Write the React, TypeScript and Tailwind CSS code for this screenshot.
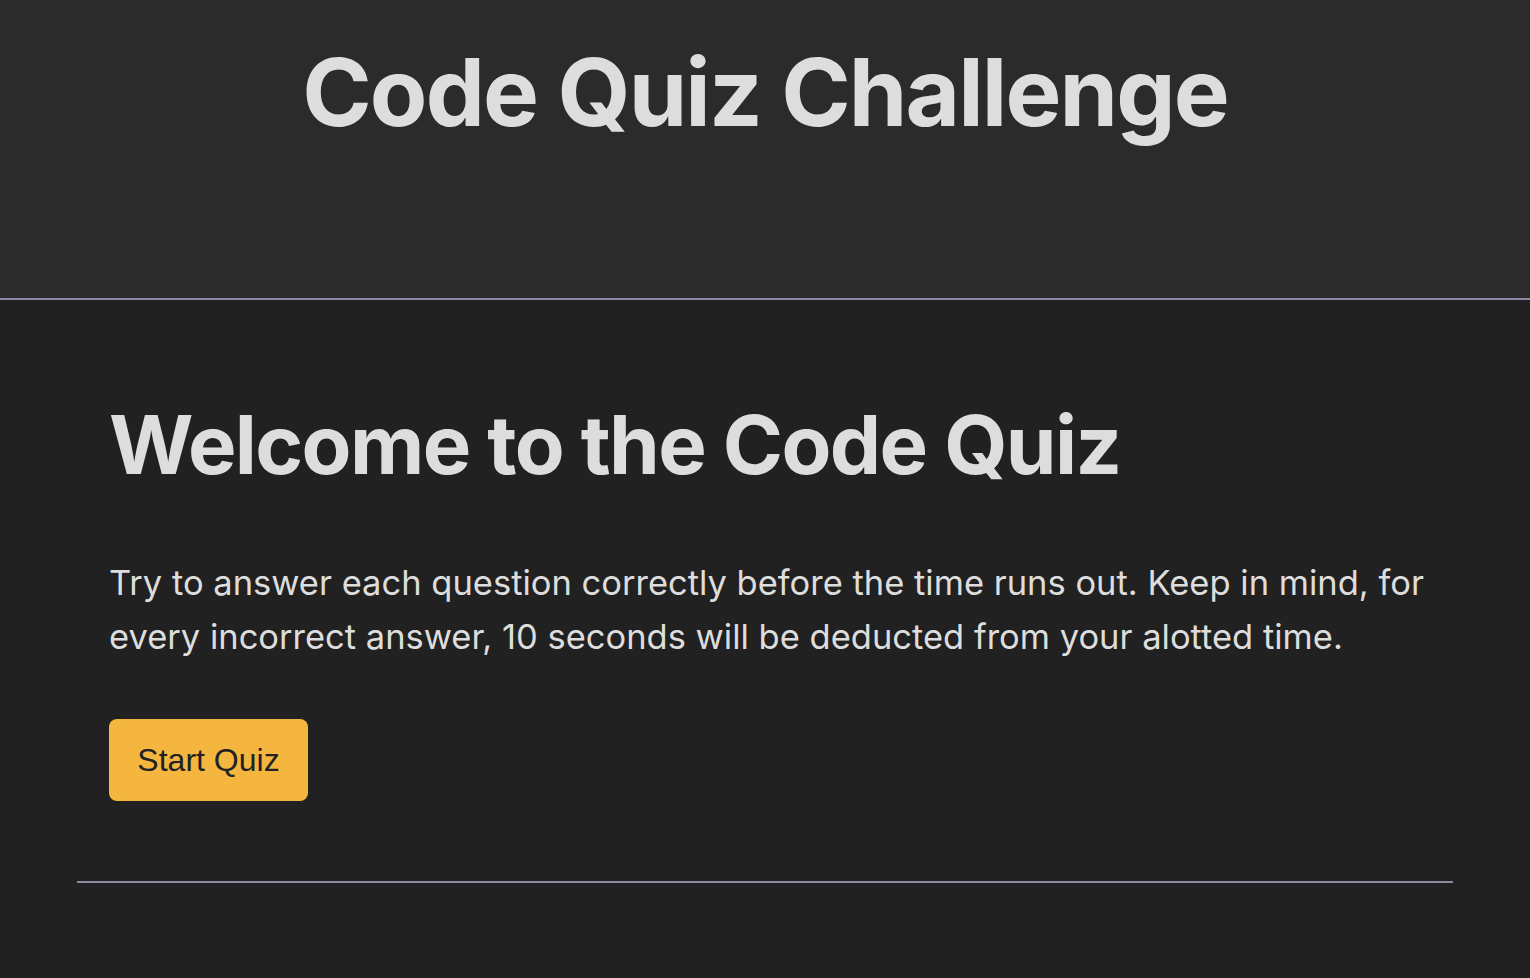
export default function App() {
  return (
    <div className="min-h-[978px] bg-[#212121] font-['Inter',sans-serif] text-[#dddddd]">
      <header className="h-[300px] bg-[#2b2b2b] border-b-2 border-[#8b8aa3] pt-[36px]">
        <h1 className="text-center text-[94px] font-bold leading-[1.2] tracking-[-0.02em]">
          Code Quiz Challenge
        </h1>
      </header>

      <main className="px-[77px]">
        <section className="pl-[32px] pr-[8px] pt-[96px] pb-[80px] border-b-2 border-[#8b8aa3]">
          <h2 className="text-[81.5px] font-bold leading-[1.2] tracking-[-0.02em]">
            Welcome to the Code Quiz
          </h2>
          <p className="mt-[62px] text-[34.5px] leading-[54px]">
            Try to answer each question correctly before the time runs out. Keep in mind, for
            every incorrect answer, 10 seconds will be deducted from your alotted time.
          </p>
          <button className="mt-[55px] h-[82px] w-[199px] rounded-[8px] bg-[#f4b63f] text-[32px] text-[#222222] font-['Liberation_Sans',Arial,sans-serif]">
            Start Quiz
          </button>
        </section>
      </main>
    </div>
  );
}
